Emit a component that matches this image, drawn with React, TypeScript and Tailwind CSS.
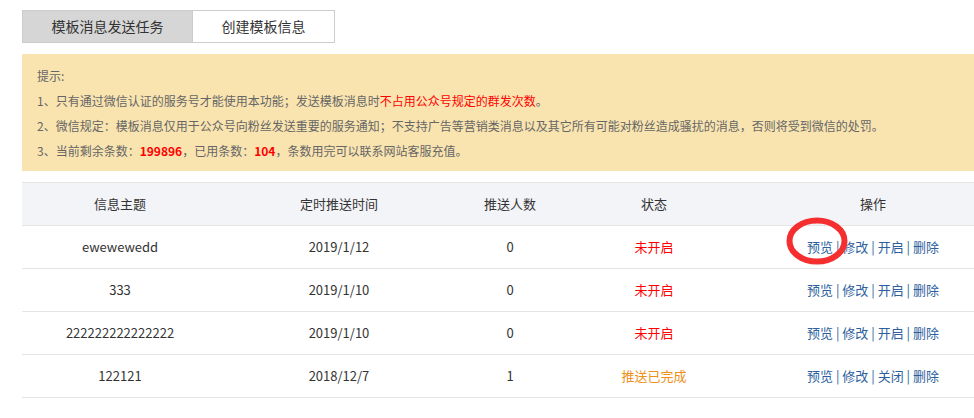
const rows = [
  { title: "ewewewedd", time: "2019/1/12", count: "0", status: "未开启", done: false, toggle: "开启" },
  { title: "333", time: "2019/1/10", count: "0", status: "未开启", done: false, toggle: "开启" },
  { title: "222222222222222", time: "2019/1/10", count: "0", status: "未开启", done: false, toggle: "开启" },
  { title: "122121", time: "2018/12/7", count: "1", status: "推送已完成", done: true, toggle: "关闭" },
]

const font = { fontFamily: '"Microsoft YaHei", "Noto Sans CJK SC", "Noto Sans", sans-serif' }

function Actions({ toggle }: { toggle: string }) {
  return (
    <span className="text-[#2d5f9e]">
      <a>预览</a> | <a>修改</a> | <a>{toggle}</a> | <a>删除</a>
    </span>
  )
}

export default function App() {
  return (
    <div className="relative w-[974px] h-[418px] overflow-hidden bg-white" style={font}>
      <div className="w-[976px] ml-[22px] pt-[10px]">
        {/* tabs */}
        <div className="flex h-[33px] text-[14px] text-[#333]">
          <div className="w-[171px] flex items-center justify-center bg-[#d6d6d6] border border-[#cccccc]">
            模板消息发送任务
          </div>
          <div className="w-[142px] flex items-center justify-center bg-white border border-l-0 border-[#cccccc]">
            创建模板信息
          </div>
        </div>

        {/* tips */}
        <div className="mt-[11px] bg-[#f9e4b0] pl-[15px] pt-[9px] pb-[8px] text-[12px] leading-[25px] text-[#666]">
          <p>提示:</p>
          <p>
            1、只有通过微信认证的服务号才能使用本功能；发送模板消息时
            <span className="text-[#ff0000]">不占用公众号规定的群发次数</span>。
          </p>
          <p>
            2、微信规定：模板消息仅用于公众号向粉丝发送重要的服务通知；不支持广告等营销类消息以及其它所有可能对粉丝造成骚扰的消息，否则将受到微信的处罚。
          </p>
          <p>
            3、当前剩余条数：<b className="text-[#ff0000]">199896</b>，已用条数：<b className="text-[#ff0000]">104</b>，条数用完可以联系网站客服充值。
          </p>
        </div>

        {/* table */}
        <table className="mt-[11px] w-[976px] table-fixed border-collapse text-[13px] text-[#333]">
          <colgroup>
            <col className="w-[196px]" />
            <col className="w-[242px]" />
            <col className="w-[100px]" />
            <col className="w-[188px]" />
            <col className="w-[250px]" />
          </colgroup>
          <thead>
            <tr className="h-[43px] bg-[#f3f4f8] border-t border-b border-[#e4e4e4]">
              <th className="font-normal text-center">信息主题</th>
              <th className="font-normal text-center">定时推送时间</th>
              <th className="font-normal text-center">推送人数</th>
              <th className="font-normal text-center">状态</th>
              <th className="font-normal text-center">操作</th>
            </tr>
          </thead>
          <tbody>
            {rows.map((r, i) => (
              <tr key={i} className="h-[43px] border-b border-[#e4e4e4]">
                <td className="text-center">{r.title}</td>
                <td className="text-center">{r.time}</td>
                <td className="text-center">{r.count}</td>
                <td className={`text-center ${r.done ? "text-[#ee9018]" : "text-[#ff0000]"}`}>{r.status}</td>
                <td className="text-center">
                  <Actions toggle={r.toggle} />
                </td>
              </tr>
            ))}
          </tbody>
        </table>
      </div>

      {/* red annotation circle */}
      <svg className="absolute left-[786px] top-[217px]" width="62" height="48" viewBox="0 0 62 48">
        <ellipse cx="31" cy="24" rx="27.5" ry="20.5" fill="none" stroke="#f52f2f" strokeWidth="6" />
      </svg>
    </div>
  )
}
